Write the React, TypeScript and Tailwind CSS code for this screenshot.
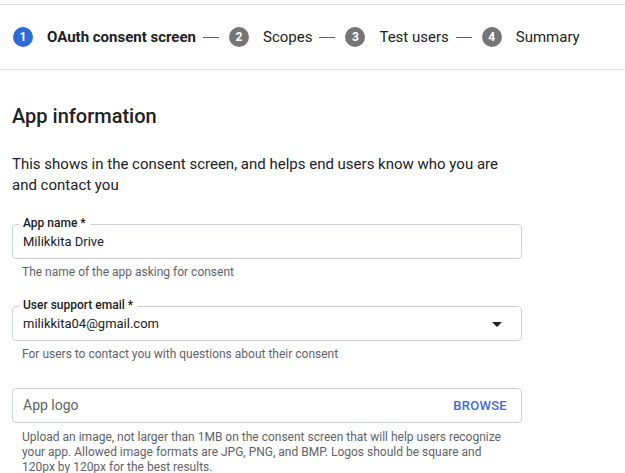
const steps = [
  { n: 1, label: "OAuth consent screen", active: true },
  { n: 2, label: "Scopes", active: false },
  { n: 3, label: "Test users", active: false },
  { n: 4, label: "Summary", active: false },
];

function Field({
  label,
  value,
  help,
  dropdown,
}: {
  label: string;
  value: string;
  help: string;
  dropdown?: boolean;
}) {
  return (
    <div>
      <div className="relative h-[35px] rounded-[4px] border border-[#cdd0d4] flex items-center pl-[10px] pr-[12px]">
        <span className="absolute left-[6px] -top-[9px] px-[4px] bg-white text-[12px] leading-[14px] font-medium text-[#202124]">
          {label}
        </span>
        <span className="flex-1 text-[13px] text-[#202124]">{value}</span>
        {dropdown && (
          <svg width="24" height="24" viewBox="0 0 24 24" className="text-[#202124]">
            <path d="M7 10l5 5 5-5z" fill="currentColor" />
          </svg>
        )}
      </div>
      <p className="mt-[5px] pl-[10px] text-[12px] leading-[16px] text-[#5f6368]">{help}</p>
    </div>
  );
}

export default function App() {
  return (
    <div className="w-[625px] h-[473px] overflow-hidden bg-white text-[#202124] font-['Roboto',sans-serif]">
      <div className="h-[4px]" />
      <div className="h-[66px] border-t border-b border-[#e0e0e0] flex items-center pl-[13px]">
        {steps.map((s, i) => (
          <div key={s.n} className="flex items-center">
            <span
              className={`w-[20px] h-[20px] rounded-full flex items-center justify-center text-white text-[12px] font-bold ${
                s.active ? "bg-[#2f6ad9]" : "bg-[#757575]"
              }`}
            >
              {s.n}
            </span>
            <span
              className={`ml-[14px] text-[15px] ${s.active ? "font-bold text-[#202124]" : "text-[#202124]"}`}
            >
              {s.label}
            </span>
            {i < steps.length - 1 && <span className="ml-[7px] mr-[10px] w-[16px] h-px bg-[#5f6368]" />}
          </div>
        ))}
      </div>

      <div className="pl-[12px] w-[522px]">
        <h2 className="mt-[34px] text-[20px] leading-[24px] font-medium">App information</h2>
        <p className="mt-[26px] text-[15px] leading-[21px] text-[#202124]">
          This shows in the consent screen, and helps end users know who you are and contact you
        </p>

        <div className="mt-[28px] flex flex-col gap-[26px]">
          <Field label="App name *" value="Milikkita Drive" help="The name of the app asking for consent" />
          <Field
            label="User support email *"
            value="milikkita04@gmail.com"
            help="For users to contact you with questions about their consent"
            dropdown
          />
          <div>
            <div className="h-[35px] rounded-[4px] border border-[#cdd0d4] flex items-center pl-[10px] pr-[14px]">
              <span className="flex-1 text-[14px] text-[#5f6368]">App logo</span>
              <span className="text-[13px] font-medium tracking-[0.3px] text-[#3f6ad8]">BROWSE</span>
            </div>
            <p className="mt-[7px] pl-[10px] pr-[6px] text-[12px] leading-[15px] text-[#5f6368]">
              Upload an image, not larger than 1MB on the consent screen that will help users recognize your app.
              Allowed image formats are JPG, PNG, and BMP. Logos should be square and 120px by 120px for the best
              results.
            </p>
          </div>
        </div>
      </div>
    </div>
  );
}
